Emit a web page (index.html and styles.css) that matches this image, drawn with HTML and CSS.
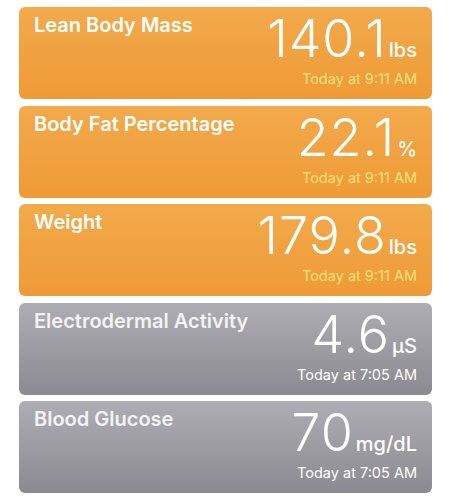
FILE: index.html
```html
<!DOCTYPE html>
<html>
<head>
<meta charset="utf-8">
<link rel="stylesheet" href="styles.css">
</head>
<body>
<div class="list">
  <div class="card orange">
    <div class="title">Lean Body Mass</div>
    <div class="right">
      <div class="value"><span class="num">140.1</span><span class="unit">lbs</span></div>
      <div class="time">Today at 9:11 AM</div>
    </div>
  </div>
  <div class="card orange">
    <div class="title">Body Fat Percentage</div>
    <div class="right">
      <div class="value"><span class="num">22.1</span><span class="unit">%</span></div>
      <div class="time">Today at 9:11 AM</div>
    </div>
  </div>
  <div class="card orange">
    <div class="title">Weight</div>
    <div class="right">
      <div class="value"><span class="num">179.8</span><span class="unit">lbs</span></div>
      <div class="time">Today at 9:11 AM</div>
    </div>
  </div>
  <div class="card grey">
    <div class="title">Electrodermal Activity</div>
    <div class="right">
      <div class="value"><span class="num">4.6</span><span class="unit">µS</span></div>
      <div class="time">Today at 7:05 AM</div>
    </div>
  </div>
  <div class="card grey">
    <div class="title">Blood Glucose</div>
    <div class="right">
      <div class="value"><span class="num">70</span><span class="unit">mg/dL</span></div>
      <div class="time">Today at 7:05 AM</div>
    </div>
  </div>
</div>
</body>
</html>
```
FILE: styles.css
```css
html, body {
  margin: 0;
  padding: 0;
  background: #ffffff;
}
body {
  font-family: Inter, "Liberation Sans", sans-serif;
}
.list {
  display: flex;
  flex-direction: column;
  gap: 6.5px;
  padding: 7px 0 0 19px;
  width: 413px;
}
.card {
  height: 92px;
  box-sizing: border-box;
  border-radius: 6px;
  padding: 0 15px;
  display: flex;
  justify-content: space-between;
  align-items: flex-start;
  color: #ffffff;
}
.orange {
  background: linear-gradient(180deg, #f2aa4b 0%, #ef9a36 100%);
}
.grey {
  background: linear-gradient(180deg, #aeadb3 0%, #8b8a90 100%);
}
.title {
  font-size: 20px;
  font-weight: 600;
  line-height: 24px;
  padding-top: 6px;
}
.grey .title {
  color: #f3f3f5;
}
.right {
  display: flex;
  flex-direction: column;
  align-items: flex-end;
}
.value {
  display: flex;
  align-items: baseline;
  margin-top: 6px;
}
.num {
  font-size: 52px;
  line-height: 52px;
  font-weight: 300;
  letter-spacing: 1px;
}
.unit {
  font-size: 20px;
  line-height: 20px;
  font-weight: 500;
  margin-left: 2px;
}
.time {
  font-size: 14.5px;
  line-height: 18px;
  margin-top: 5px;
  color: #fde27a;
}
.grey .time {
  color: #ffffff;
}
```
